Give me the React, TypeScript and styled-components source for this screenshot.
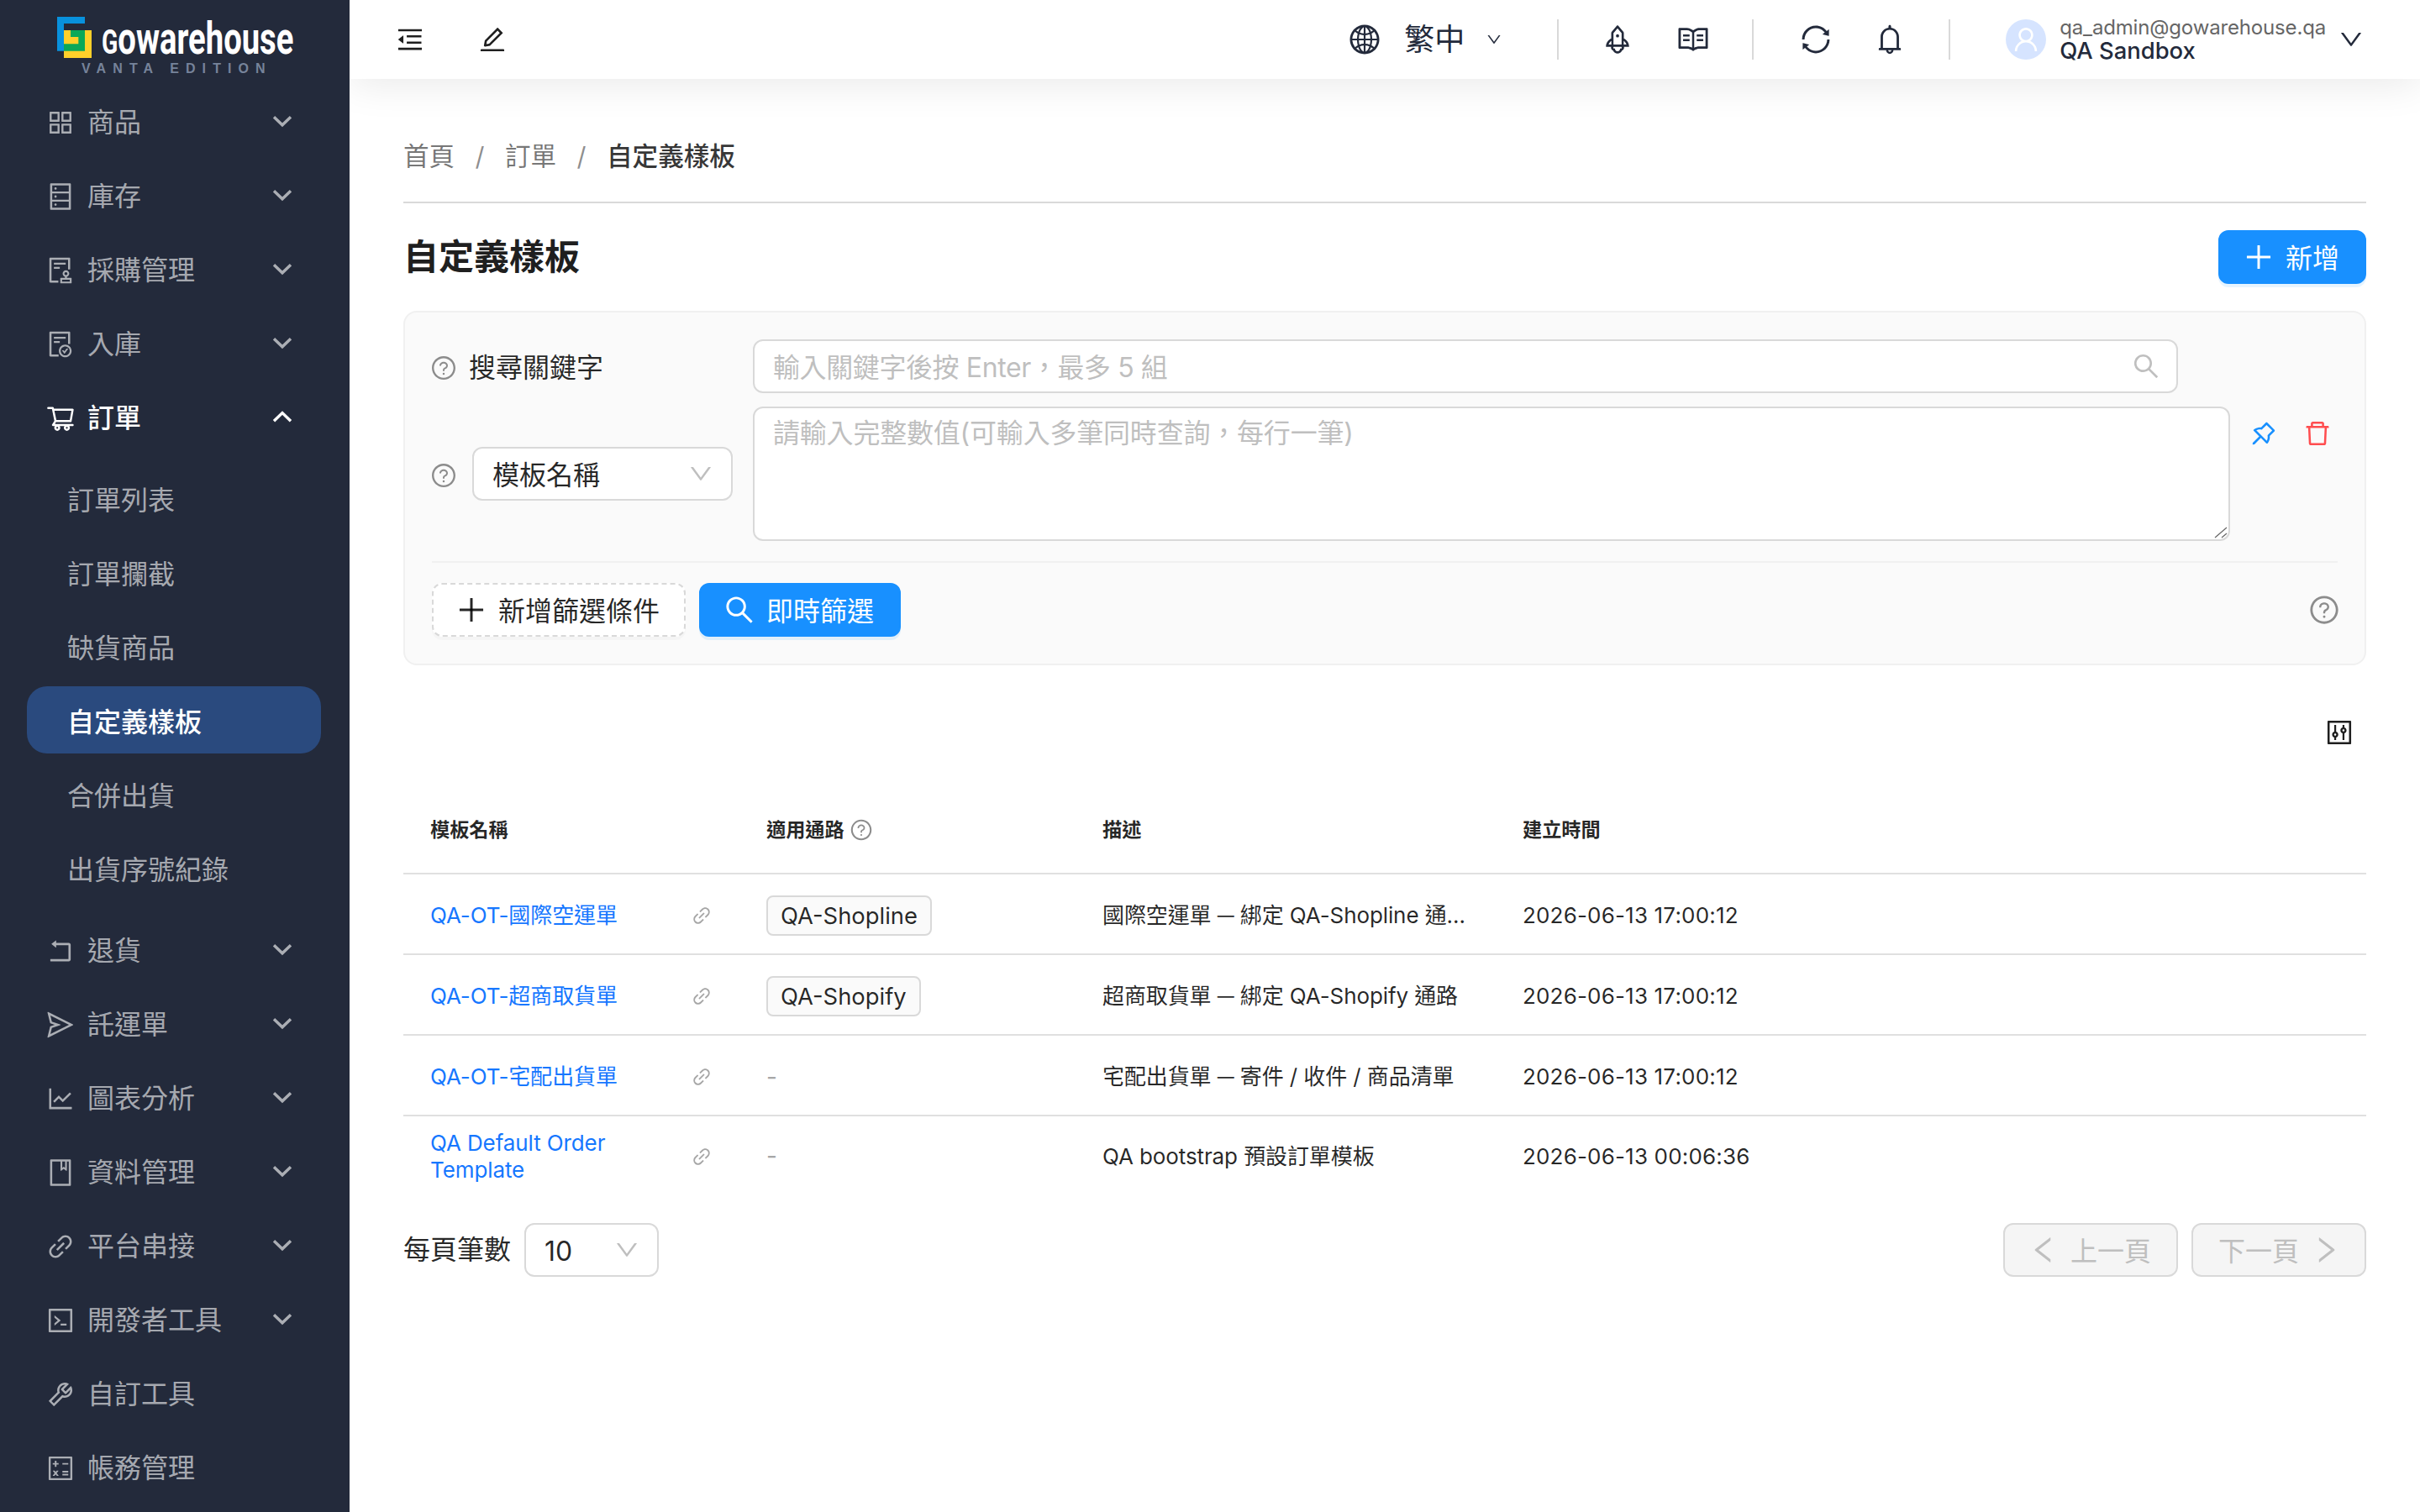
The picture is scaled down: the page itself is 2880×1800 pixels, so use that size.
import React from "react";
import styled, { createGlobalStyle } from "styled-components";
import {
  AiOutlineAppstore, AiOutlineDatabase, AiOutlineAudit, AiOutlineFileDone, AiOutlineShoppingCart,
  AiOutlineRollback, AiOutlineSend, AiOutlineLineChart, AiOutlineBook, AiOutlineLink, AiOutlineCode,
  AiOutlineTool, AiOutlineCalculator, AiOutlineGlobal, AiOutlineRocket, AiOutlineRead, AiOutlineSync,
  AiOutlineBell, AiOutlineUser, AiOutlineDown, AiOutlineMenuFold, AiOutlineEdit, AiOutlinePlus,
  AiOutlineSearch, AiOutlineQuestionCircle, AiOutlinePushpin, AiOutlineDelete, AiOutlineControl,
  AiOutlineLeft, AiOutlineRight,
} from "react-icons/ai";

const FONT = `Inter, "Noto Sans CJK TC", sans-serif`;

const Global = createGlobalStyle`
  html, body { margin: 0; padding: 0; background: #fff; }
  #root { zoom: 2; width: 1440px; height: 900px; overflow: hidden; }
  * { box-sizing: border-box; }
  body { font-family: ${FONT}; color: rgba(0,0,0,.85); }
`;

const Shell = styled.div`
  display: flex;
  width: 1440px;
  height: 900px;
  overflow: hidden;
  font-family: ${FONT};
`;

const Sidebar = styled.aside`
  flex: 0 0 208px;
  background: #232a3b;
  display: flex;
  flex-direction: column;
  position: relative;
  z-index: 3;
`;

const LogoBar = styled.div`
  height: 51px;
  padding: 10px 0 0 34px;
  display: flex;
  gap: 6px;
  align-items: flex-start;
`;

const LogoWords = styled.div`
  display: flex;
  flex-direction: column;
  width: 114px;
`;

const LogoName = styled.span`
  display: block;
  margin-top: 1px;
  font: 700 27px/24px Roboto, sans-serif;
  color: #fff;
  white-space: nowrap;
  transform: scaleX(0.708);
  transform-origin: left top;
`;

const LogoInitial = styled.span`
  font-size: 20px;
  text-transform: uppercase;
`;

const LogoEdition = styled.span`
  display: block;
  margin: -1px 0 0 -12px;
  font: 600 8px/9px "Liberation Sans", sans-serif;
  letter-spacing: 4.05px;
  color: #76839a;
  white-space: nowrap;
`;

const MenuRow = styled.div<{ $open?: boolean }>`
  height: 40px;
  margin: 2px 0;
  padding: 0 34px 0 29px;
  display: flex;
  align-items: center;
  gap: 7px;
  flex: none;
  font-size: 16px;
  color: ${(p) => (p.$open ? "#fff" : "rgba(255,255,255,.62)")};
  font-weight: ${(p) => (p.$open ? 500 : 400)};
  svg.menu-icon { font-size: 18px; flex: none; margin-left: -2px; }
`;

const MenuLabel = styled.span`
  flex: 1;
  line-height: 24px;
`;

const SubList = styled.div`
  margin: 3.5px 0 5.5px;
  display: flex;
  flex-direction: column;
  flex: none;
`;

const SubItem = styled.div<{ $active?: boolean }>`
  height: 40px;
  margin: 2px 17px 2px 16px;
  padding-left: 24px;
  display: flex;
  align-items: center;
  border-radius: 12px;
  font-size: 16px;
  font-weight: ${(p) => (p.$active ? 500 : 400)};
  background: ${(p) => (p.$active ? "#2a4a7e" : "transparent")};
  color: ${(p) => (p.$active ? "#fff" : "rgba(255,255,255,.62)")};
`;

const Main = styled.div`
  flex: 1;
  min-width: 0;
  display: flex;
  flex-direction: column;
  position: relative;
`;

const Header = styled.header`
  height: 47px;
  flex: none;
  background: #fff;
  box-shadow: 0 3px 24px rgba(0,0,0,.09);
  position: relative;
  z-index: 2;
  display: flex;
  align-items: center;
  justify-content: space-between;
  padding: 0 33px 0 27px;
`;

const HeaderLeft = styled.div`
  display: flex;
  align-items: center;
  gap: 31px;
  font-size: 18px;
  color: #1f1f1f;
  svg { display: block; }
`;

const HeaderRight = styled.div`
  display: flex;
  align-items: center;
  color: #232a3b;
`;

const Lang = styled.div`
  display: flex;
  align-items: center;
  font-size: 18px;
  line-height: 24px;
  margin-right: 32.5px;
  svg:first-child { font-size: 20px; margin-right: 13.5px; }
  svg:last-child { font-size: 10px; margin-left: 12.5px; }
`;

const VRule = styled.span`
  width: 1px;
  height: 24px;
  background: #d9d9d9;
`;

const IconGroup = styled.div<{ $lead: number; $gap: number }>`
  display: flex;
  align-items: center;
  gap: ${(p) => p.$gap}px;
  padding: 0 25px 0 ${(p) => p.$lead}px;
  font-size: 20px;
  svg { display: block; }
`;

const Account = styled.div`
  display: flex;
  align-items: center;
  margin-left: 33px;
`;

const Avatar = styled.span`
  width: 24px;
  height: 24px;
  border-radius: 50%;
  background: #d6e4ff;
  color: #fff;
  font-size: 18px;
  display: flex;
  align-items: center;
  justify-content: center;
  margin-right: 8px;
`;

const AccountText = styled.div`
  display: flex;
  flex-direction: column;
  margin-right: 7px;
`;

const Email = styled.span`
  font-size: 12px;
  line-height: 13px;
  letter-spacing: -0.08px;
  color: #666;
`;

const Org = styled.span`
  font-size: 13.7px;
  font-weight: 500;
  line-height: 14px;
  color: #232a3b;
`;

const Content = styled.main`
  flex: 1;
  padding: 0 32px;
  display: flex;
  flex-direction: column;
`;

const Crumbs = styled.nav`
  padding: 34px 0 15px;
  border-bottom: 1px solid #d9d9d9;
  display: flex;
  font-size: 15.3px;
  line-height: 24px;
  color: rgba(0,0,0,.55);
`;

const CrumbSep = styled.span`
  margin: 0 12.2px;
  color: rgba(0,0,0,.45);
`;

const CrumbNow = styled.span`
  font-weight: 500;
  color: rgba(0,0,0,.8);
`;

const TitleRow = styled.div`
  margin-top: 16px;
  display: flex;
  align-items: center;
  justify-content: space-between;
`;

const Title = styled.h1`
  margin: 0;
  font-size: 21px;
  line-height: 32px;
  font-weight: 600;
  color: rgba(0,0,0,.88);
`;

const Button = styled.button<{ $variant?: "primary" | "dashed" | "disabled" }>`
  height: 32px;
  padding: 2px ${(p) => (p.$variant === "dashed" ? 14.5 : 15)}px 0;
  display: inline-flex;
  align-items: center;
  gap: 8px;
  font: 400 16px/24px ${FONT};
  border-radius: 6px;
  border: 1px ${(p) => (p.$variant === "dashed" ? "dashed" : "solid")}
    ${(p) => (p.$variant === "primary" ? "#1890ff" : "#d9d9d9")};
  background: ${(p) => (p.$variant === "primary" ? "#1890ff" : p.$variant === "disabled" ? "#f5f5f5" : "#fff")};
  color: ${(p) => (p.$variant === "primary" ? "#fff" : p.$variant === "disabled" ? "#bfbfbf" : "rgba(0,0,0,.85)")};
  box-shadow: ${(p) =>
    p.$variant === "primary" ? "0 2px 0 rgba(5,145,255,.1)" : p.$variant === "dashed" ? "0 2px 0 rgba(0,0,0,.02)" : "none"};
  svg { font-size: 20px; flex: none; margin: -2px -2px 0; }
`;

const FilterPanel = styled.section`
  margin-top: 16px;
  height: 211px;
  padding: 16px 16px 16px;
  background: #fafafa;
  border: 1px solid #f0f0f0;
  border-radius: 8px;
  display: flex;
  flex-direction: column;
`;

const KeywordRow = styled.div`
  display: flex;
  align-items: center;
  height: 32px;
`;

const KeywordLabel = styled.label`
  flex: 0 0 191px;
  padding-top: 2px;
  display: flex;
  align-items: center;
  gap: 7px;
  font-size: 16px;
  line-height: 24px;
`;

const Help = styled(AiOutlineQuestionCircle)`
  font-size: 16px;
  color: #8c8c8c;
  flex: none;
  margin-left: -1px;
`;

const SearchBox = styled.div`
  width: 848px;
  height: 32px;
  background: #fff;
  border: 1px solid #d9d9d9;
  border-radius: 6px;
  padding: 0 9px 0 11px;
  display: flex;
  align-items: center;
  svg { font-size: 18px; color: #bfbfbf; flex: none; }
`;

const TextInput = styled.input`
  flex: 1;
  min-width: 0;
  border: 0;
  outline: 0;
  background: transparent;
  font: 400 16px/24px ${FONT};
  letter-spacing: -0.2px;
  padding: 2px 0 0;
  &::placeholder { color: #bfbfbf; opacity: 1; }
`;

const ValueRow = styled.div`
  margin-top: 8px;
  display: flex;
  align-items: flex-start;
`;

const FieldPicker = styled.div`
  flex: 0 0 191px;
  height: 80px;
  display: flex;
  align-items: center;
  gap: 9px;
  > svg { margin-top: 2px; }
`;

const Select = styled.div<{ $width: number }>`
  width: ${(p) => p.$width}px;
  height: 32px;
  background: #fff;
  border: 1px solid #d9d9d9;
  border-radius: 6px;
  padding: 2px 11px 0;
  display: flex;
  align-items: center;
  justify-content: space-between;
  font-size: 16px;
  line-height: 24px;
  svg { font-size: 16px; color: #bfbfbf; margin: -2px -1px 0 0; }
`;

const AreaWrap = styled.div`
  position: relative;
  flex: none;
  width: 879px;
  height: 80px;
`;

const ValueArea = styled.textarea`
  width: 100%;
  height: 100%;
  display: block;
  resize: none;
  background: #fff;
  border: 1px solid #d9d9d9;
  border-radius: 6px;
  padding: 3px 11px;
  outline: 0;
  font: 400 16px/24px ${FONT};
  letter-spacing: -0.1px;
  &::placeholder { color: #bfbfbf; opacity: 1; }
`;

const ResizeGrip = styled.svg`
  position: absolute;
  right: 1.5px;
  bottom: 1.5px;
  width: 8px;
  height: 7px;
  pointer-events: none;
`;

const RowActions = styled.div`
  display: flex;
  gap: 14px;
  padding: 7px 0 0 11px;
  font-size: 18px;
  svg { display: block; }
`;

const PinIcon = styled(AiOutlinePushpin)`
  color: #1890ff;
`;

const TrashIcon = styled(AiOutlineDelete)`
  color: #ff4d4f;
`;

const PanelRule = styled.hr`
  margin: 12px 0;
  border: 0;
  border-top: 1px solid #f0f0f0;
  width: 100%;
`;

const PanelActions = styled.div`
  display: flex;
  align-items: center;
  gap: 8px;
`;

const PanelHelp = styled.div`
  margin-left: auto;
  display: flex;
  font-size: 18px;
  svg { font-size: 19px; margin: 0 -1.5px 0 0; }
`;

const TableTools = styled.div`
  margin-top: 31px;
  padding-right: 7px;
  display: flex;
  justify-content: flex-end;
  font-size: 18px;
  color: #1f1f1f;
  svg { display: block; }
`;

const Table = styled.table`
  margin-top: 25px;
  width: 100%;
  table-layout: fixed;
  border-collapse: collapse;
`;

const HeadCell = styled.th<{ $width?: number }>`
  width: ${(p) => (p.$width ? `${p.$width}px` : "auto")};
  height: 50px;
  padding: 0 16px 2px;
  text-align: left;
  font-size: 11.6px;
  font-weight: 600;
  line-height: 16px;
  color: rgba(0,0,0,.85);
  border-bottom: 1px solid #e0e0e0;
  svg { font-size: 14px; color: #8c8c8c; vertical-align: -3px; margin-left: 3px; }
`;

const Row = styled.tr`
  &:not(:last-child) td { border-bottom: 1px solid #e0e0e0; padding-top: 2px; }
`;

const Cell = styled.td`
  height: 48px;
  padding: 0 16px;
  font-size: 13px;
  line-height: 16px;
  color: rgba(0,0,0,.85);
`;

const DateText = styled.span`
  letter-spacing: 0.09px;
`;

const NameWrap = styled.div`
  display: flex;
  align-items: center;
  justify-content: space-between;
  gap: 8px;
  svg { font-size: 13px; color: #a6a6a6; flex: none; }
`;

const NameLink = styled.a`
  color: #1677ff;
  max-width: 130px;
  letter-spacing: -0.05px;
`;

const ChannelTag = styled.span`
  display: inline-block;
  height: 24px;
  padding: 0 7.5px;
  line-height: 22px;
  font-size: 13.7px;
  background: #fafafa;
  border: 1px solid #d9d9d9;
  border-radius: 4px;
`;

const Dash = styled.span`
  color: #a6a6a6;
  font-size: 14px;
`;

const Clip = styled.div`
  overflow: hidden;
  white-space: nowrap;
  text-overflow: ellipsis;
  letter-spacing: -0.05px;
`;

const NarrowDash = styled.span`
  font-size: 10px;
  vertical-align: 1px;
`;

const Pager = styled.div`
  margin-top: 16px;
  display: flex;
  align-items: center;
  font-size: 16px;
  line-height: 24px;
`;

const PagerLabel = styled.span`
  margin-right: 8px;
`;

const PagerButtons = styled.div`
  margin-left: auto;
  display: flex;
  gap: 8px;
`;

const Chevron = ({ up }: { up?: boolean }) => (
  <svg width="12" height="8" viewBox="0 0 12 8" fill="none" style={{ flex: "none", marginTop: -2 }}>
    <path d={up ? "M1 6.6 6 1.8 11 6.6" : "M1 1.6 6 6.4 11 1.6"} stroke="currentColor" strokeWidth="1.7" />
  </svg>
);

const Logo = () => (
  <svg width="20.5" height="24.5" viewBox="84 58 123 147" style={{ flex: "none" }}>
    <path d="M84 58H183V82H108V180H84Z" fill="#0891dd" />
    <rect x="108" y="106" width="99" height="99" fill="#ffd02a" />
    <path d="M132 106H183V180H108V155H160V130H132Z" fill="#0aa858" />
  </svg>
);

type TopItem = { icon: React.ComponentType<{ className?: string }>; label: string; arrow?: boolean };

const topA: TopItem[] = [
  { icon: AiOutlineAppstore, label: "商品", arrow: true },
  { icon: AiOutlineDatabase, label: "庫存", arrow: true },
  { icon: AiOutlineAudit, label: "採購管理", arrow: true },
  { icon: AiOutlineFileDone, label: "入庫", arrow: true },
];
const topB: TopItem[] = [
  { icon: AiOutlineRollback, label: "退貨", arrow: true },
  { icon: AiOutlineSend, label: "託運單", arrow: true },
  { icon: AiOutlineLineChart, label: "圖表分析", arrow: true },
  { icon: AiOutlineBook, label: "資料管理", arrow: true },
  { icon: AiOutlineLink, label: "平台串接", arrow: true },
  { icon: AiOutlineCode, label: "開發者工具", arrow: true },
  { icon: AiOutlineTool, label: "自訂工具" },
  { icon: AiOutlineCalculator, label: "帳務管理" },
];
const subs = ["訂單列表", "訂單攔截", "缺貨商品", "自定義樣板", "合併出貨", "出貨序號紀錄"];

const MenuEntry = ({ item }: { item: TopItem }) => {
  const Icon = item.icon;
  return (
    <MenuRow>
      <Icon className="menu-icon" />
      <MenuLabel>{item.label}</MenuLabel>
      {item.arrow && <Chevron />}
    </MenuRow>
  );
};

const rows = [
  { name: "QA-OT-國際空運單", tag: "QA-Shopline", desc: ["國際空運單 ", " 綁定 QA-Shopline 通路與商品清單"], at: "2026-06-13 17:00:12" },
  { name: "QA-OT-超商取貨單", tag: "QA-Shopify", desc: ["超商取貨單 ", " 綁定 QA-Shopify 通路"], at: "2026-06-13 17:00:12" },
  { name: "QA-OT-宅配出貨單", tag: "", desc: ["宅配出貨單 ", " 寄件 / 收件 / 商品清單"], at: "2026-06-13 17:00:12" },
  { name: "QA Default Order Template", tag: "", desc: ["QA bootstrap 預設訂單模板"], at: "2026-06-13 00:06:36" },
];

export default function App() {
  return (
    <>
      <Global />
      <Shell>
        <Sidebar>
          <LogoBar>
            <Logo />
            <LogoWords>
              <LogoName><LogoInitial>g</LogoInitial>owarehouse</LogoName>
              <LogoEdition>VANTA EDITION</LogoEdition>
            </LogoWords>
          </LogoBar>
          {topA.map((it) => <MenuEntry key={it.label} item={it} />)}
          <MenuRow $open>
            <AiOutlineShoppingCart className="menu-icon" />
            <MenuLabel>訂單</MenuLabel>
            <Chevron up />
          </MenuRow>
          <SubList>
            {subs.map((s) => <SubItem key={s} $active={s === "自定義樣板"}>{s}</SubItem>)}
          </SubList>
          {topB.map((it) => <MenuEntry key={it.label} item={it} />)}
        </Sidebar>
        <Main>
          <Header>
            <HeaderLeft>
              <AiOutlineMenuFold />
              <AiOutlineEdit />
            </HeaderLeft>
            <HeaderRight>
              <Lang>
                <AiOutlineGlobal />
                繁中
                <AiOutlineDown />
              </Lang>
              <VRule />
              <IconGroup $lead={25} $gap={25}>
                <AiOutlineRocket />
                <AiOutlineRead />
              </IconGroup>
              <VRule />
              <IconGroup $lead={27} $gap={24}>
                <AiOutlineSync />
                <AiOutlineBell />
              </IconGroup>
              <VRule />
              <Account>
                <Avatar><AiOutlineUser /></Avatar>
                <AccountText>
                  <Email>qa_admin@gowarehouse.qa</Email>
                  <Org>QA Sandbox</Org>
                </AccountText>
                <AiOutlineDown style={{ fontSize: 16 }} />
              </Account>
            </HeaderRight>
          </Header>
          <Content>
            <Crumbs>
              <span>首頁</span><CrumbSep>/</CrumbSep><span>訂單</span><CrumbSep>/</CrumbSep><CrumbNow>自定義樣板</CrumbNow>
            </Crumbs>
            <TitleRow>
              <Title>自定義樣板</Title>
              <Button $variant="primary"><AiOutlinePlus />新增</Button>
            </TitleRow>
            <FilterPanel>
              <KeywordRow>
                <KeywordLabel><Help />搜尋關鍵字</KeywordLabel>
                <SearchBox>
                  <TextInput placeholder="輸入關鍵字後按 Enter，最多 5 組" />
                  <AiOutlineSearch />
                </SearchBox>
              </KeywordRow>
              <ValueRow>
                <FieldPicker>
                  <Help />
                  <Select $width={155}>模板名稱<AiOutlineDown /></Select>
                </FieldPicker>
                <AreaWrap>
                  <ValueArea placeholder="請輸入完整數值(可輸入多筆同時查詢，每行一筆)" />
                  <ResizeGrip viewBox="0 0 16 14" fill="none">
                    <path d="M1 13 15 1M9 13 15 8" stroke="#666" strokeWidth="1.2" />
                  </ResizeGrip>
                </AreaWrap>
                <RowActions>
                  <PinIcon />
                  <TrashIcon />
                </RowActions>
              </ValueRow>
              <PanelRule />
              <PanelActions>
                <Button $variant="dashed"><AiOutlinePlus />新增篩選條件</Button>
                <Button $variant="primary"><AiOutlineSearch />即時篩選</Button>
                <PanelHelp><Help /></PanelHelp>
              </PanelActions>
            </FilterPanel>
            <TableTools><AiOutlineControl /></TableTools>
            <Table>
              <thead>
                <tr>
                  <HeadCell $width={200}>模板名稱</HeadCell>
                  <HeadCell $width={200}>適用通路<AiOutlineQuestionCircle /></HeadCell>
                  <HeadCell $width={250}>描述</HeadCell>
                  <HeadCell>建立時間</HeadCell>
                </tr>
              </thead>
              <tbody>
                {rows.map((r) => (
                  <Row key={r.name}>
                    <Cell>
                      <NameWrap>
                        <NameLink>{r.name}</NameLink>
                        <AiOutlineLink />
                      </NameWrap>
                    </Cell>
                    <Cell>{r.tag ? <ChannelTag>{r.tag}</ChannelTag> : <Dash>-</Dash>}</Cell>
                    <Cell>
                      <Clip>
                        {r.desc[0]}
                        {r.desc[1] && <><NarrowDash>—</NarrowDash>{r.desc[1]}</>}
                      </Clip>
                    </Cell>
                    <Cell><DateText>{r.at}</DateText></Cell>
                  </Row>
                ))}
              </tbody>
            </Table>
            <Pager>
              <PagerLabel>每頁筆數</PagerLabel>
              <Select $width={80}>10<AiOutlineDown /></Select>
              <PagerButtons>
                <Button $variant="disabled"><AiOutlineLeft />上一頁</Button>
                <Button $variant="disabled">下一頁<AiOutlineRight /></Button>
              </PagerButtons>
            </Pager>
          </Content>
        </Main>
      </Shell>
    </>
  );
}
